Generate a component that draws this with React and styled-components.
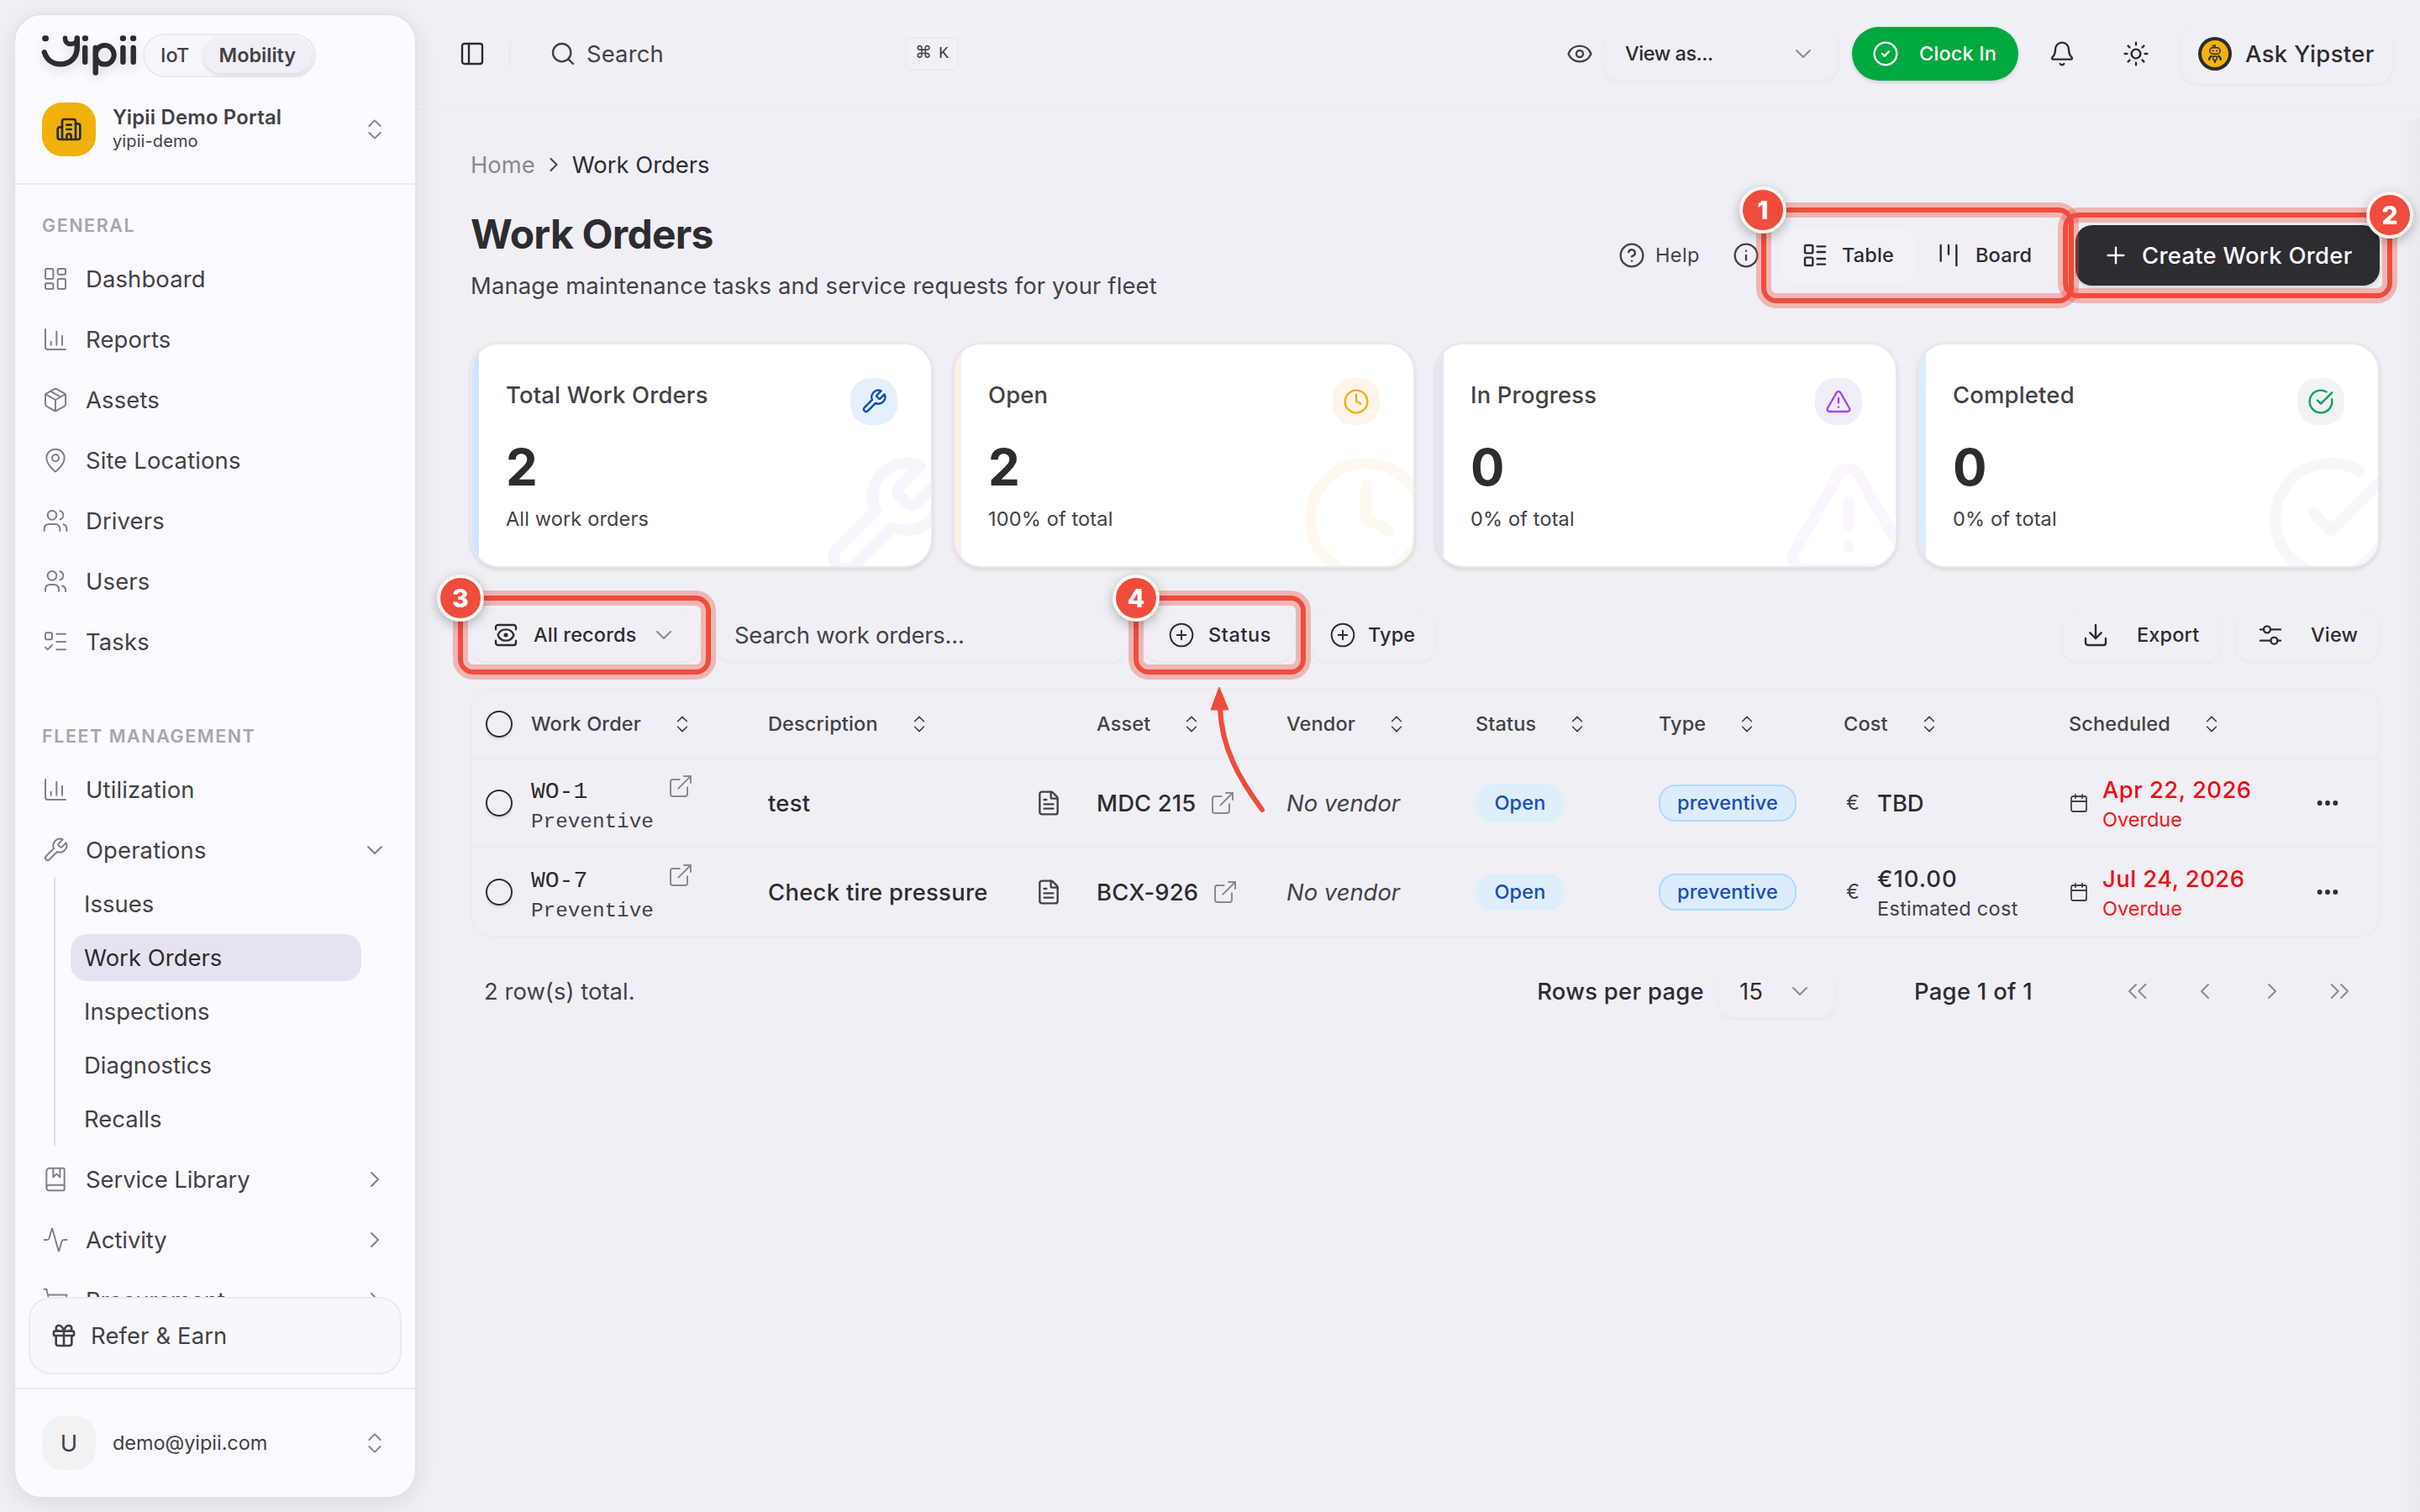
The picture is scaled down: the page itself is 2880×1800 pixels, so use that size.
import styled, { createGlobalStyle, css } from "styled-components";
import {
  Activity,
  Bell,
  BookMarked,
  Building2,
  Calendar,
  ChartColumn,
  ChevronDown,
  ChevronLeft,
  ChevronRight,
  ChevronsUpDown,
  CircleCheck,
  CircleCheckBig,
  CircleHelp,
  CirclePlus,
  Clock,
  Download,
  Ellipsis,
  ExternalLink,
  Eye,
  FileText,
  Gift,
  Info,
  Kanban,
  LayoutDashboard,
  LayoutList,
  ListTodo,
  MapPin,
  Package,
  PanelLeft,
  Plus,
  Search,
  ShoppingCart,
  Sun,
  TriangleAlert,
  Users,
  View,
} from "lucide-react";

const colors = {
  bg: "#f0eff5",
  panel: "#fbfaff",
  dark: "#2d2c31",
  text: "#434246",
  gray: "#8a898e",
  faint: "#a7a6ab",
  line: "#ebeaef",
  red: "#ef4c3d",
};

const GlobalStyle = createGlobalStyle`
  * {
    box-sizing: border-box;
  }

  body {
    margin: 0;
    background-color: ${colors.bg};
    color: ${colors.text};
    font-family: Inter, "Liberation Sans", sans-serif;
    font-size: 27.4px;
    letter-spacing: 0.05px;
    line-height: 40px;
  }

  svg {
    display: block;
    flex-shrink: 0;
  }
`;

const Page = styled.div`
  position: relative;
  display: flex;
  width: 2880px;
  height: 1800px;
  overflow: hidden;
  background-color: ${colors.bg};
`;

const Text = styled.span`
  color: ${(p) => p.$color || colors.text};
  font-size: ${(p) => p.$size || 27.4}px;
  font-weight: ${(p) => p.$weight || 400};
  letter-spacing: ${(p) => p.$ls ?? 0.15}px;
  line-height: ${(p) => p.$lh || 40}px;
  white-space: nowrap;
`;

const Strong = styled(Text)`
  color: ${(p) => p.$color || colors.dark};
  font-weight: 500;
  letter-spacing: ${(p) => p.$ls ?? 0.3}px;
`;

const Label = styled(Text)`
  color: ${(p) => p.$color || colors.dark};
  font-size: 23.5px;
  font-weight: 500;
`;

/* ---------- sidebar ---------- */

const Sidebar = styled.aside`
  display: flex;
  flex-direction: column;
  flex-shrink: 0;
  width: 480px;
  height: 1768px;
  margin: 16px 0 0 16px;
  overflow: hidden;
  background-color: ${colors.panel};
  border: 2px solid #e3e2e8;
  border-radius: 34px;
  box-shadow: 0 6px 28px rgba(40, 30, 20, 0.09);
`;

const SidebarTop = styled.div`
  height: 202px;
  padding: 22px 32px 0;
  border-bottom: 2px solid ${colors.line};
`;

const LogoRow = styled.div`
  display: flex;
  gap: 8px;
  height: 52px;
`;

const LogoSvg = styled.svg`
  margin-top: 2px;
  overflow: visible;
  filter: drop-shadow(0 6px 6px rgba(0, 0, 0, 0.12));
`;

const Switcher = styled.div`
  display: flex;
  align-items: center;
  width: 206px;
  height: 52px;
  padding: 3px;
  background-color: #f7f6fa;
  border: 2px solid ${colors.line};
  border-radius: 26px;
`;

const SwitcherItem = styled.div`
  display: flex;
  align-items: center;
  justify-content: center;
  width: ${(p) => p.$w}px;
  height: 42px;
  border-radius: 21px;

  ${(p) =>
    p.$active &&
    css`
      background-color: ${colors.bg};
      box-shadow: 0 2px 5px rgba(0, 0, 0, 0.13);
    `}
`;

const OrgRow = styled.div`
  display: flex;
  align-items: center;
  gap: 20px;
  height: 64px;
  margin-top: 30px;
`;

const OrgBadge = styled.div`
  display: flex;
  align-items: center;
  justify-content: center;
  width: 64px;
  height: 64px;
  color: ${colors.dark};
  background-color: ${(p) => p.$bg};
  border-radius: 24px;
`;

const Stack = styled.div`
  display: flex;
  flex-direction: column;
`;

const OrgName = styled(Stack)`
  height: 60px;
`;

const Grow = styled.div`
  flex: 1;
`;

const Nav = styled.nav`
  flex: 1;
  min-height: 0;
  padding-top: 28px;
  overflow: hidden;
`;

const NavLabel = styled.div`
  height: 40px;
  margin: ${(p) => p.$mt || 0}px 0 8px 32px;
  color: ${colors.faint};
  font-size: 21.5px;
  font-weight: 600;
  letter-spacing: 1.55px;
`;

const NavItem = styled.div`
  display: flex;
  align-items: center;
  gap: 20px;
  height: 72px;
  padding: 0 32px;

  svg {
    color: #828186;
  }
`;

const SubNav = styled.div`
  display: flex;
  flex-direction: column;
  gap: 8px;
  margin: -4px 0 4px 46px;
  padding: 4px 0;
  border-left: 2px solid #e1e0e5;
`;

const SubItem = styled.div`
  width: 346px;
  height: 56px;
  margin-left: 18px;
  padding: 8px 16px;
  color: ${(p) => (p.$active ? colors.dark : colors.text)};
  background-color: ${(p) => (p.$active ? "#e6e3f1" : "transparent")};
  border-radius: 20px;
`;

const ReferCard = styled.div`
  display: flex;
  align-items: center;
  gap: 16px;
  height: 92px;
  margin: 0 16px 16px;
  padding-left: 24px;
  background-color: #f8f7fc;
  border: 2px solid ${colors.line};
  border-radius: 26px;
`;

const UserRow = styled.div`
  display: flex;
  align-items: center;
  gap: 20px;
  height: 130px;
  padding: 0 32px;
  border-top: 2px solid ${colors.line};
`;

/* ---------- header ---------- */

const Main = styled.main`
  flex: 1;
  min-width: 0;
`;

const Header = styled.header`
  display: flex;
  align-items: center;
  height: 128px;
  padding: 2px 32px 0 50px;
  color: ${colors.dark};
  border-bottom: 2px solid #edecf1;
`;

const Divider = styled.div`
  width: 2px;
  height: 32px;
  margin: 0 31px 0 28px;
  background-color: #eae9ee;
`;

const Box = styled.div`
  display: flex;
  align-items: center;
  gap: ${(p) => p.$gap || 0}px;
  width: ${(p) => p.$w}px;
  height: ${(p) => p.$h || 64}px;
  margin-left: ${(p) => p.$ml || 0}px;
  padding-left: ${(p) => p.$pl || 0}px;
  border: 1px solid #edecf2;
  border-radius: ${(p) => p.$r || 20}px;
  box-shadow: 0 2px 3px rgba(0, 0, 0, 0.035);
`;

const SearchBox = styled(Box)`
  background-color: #f1f0f5;
  border-color: transparent;
  box-shadow: none;
`;

const Kbd = styled.kbd`
  display: flex;
  align-items: center;
  justify-content: center;
  gap: 8px;
  width: 64px;
  height: 40px;
  margin-right: 7px;
  color: ${colors.text};
  font-family: "Liberation Mono", "DejaVu Sans", monospace;
  font-size: 20px;
  border: 2px solid #ebeaf0;
  border-radius: 8px;
`;

const SelectChevron = styled.div`
  margin-right: 25px;
  color: ${colors.gray};
`;

const ClockIn = styled.div`
  display: flex;
  align-items: center;
  gap: 24px;
  width: 198px;
  height: 64px;
  margin-left: 16px;
  padding-left: 24px;
  color: #ffffff;
  background-color: #00a840;
  border-radius: 32px;
  box-shadow: 0 2px 4px rgba(0, 0, 0, 0.14);
`;

const IconButton = styled.div`
  display: flex;
  align-items: center;
  justify-content: center;
  width: 64px;
  height: 64px;
  margin-left: ${(p) => p.$ml || 0}px;
`;

/* ---------- content ---------- */

const Content = styled.div`
  padding: 48px 48px 0 64px;
`;

const Breadcrumb = styled.div`
  display: flex;
  align-items: center;
  gap: 8px;
  height: 40px;
`;

const PageHead = styled.div`
  display: flex;
  align-items: center;
  height: 120px;
  margin-top: 28px;
`;

const Heading = styled(Stack)`
  height: 120px;
`;

const Title = styled.h1`
  margin: 0 0 6px;
  color: ${colors.dark};
  font-size: 48px;
  font-weight: 700;
  letter-spacing: -0.75px;
  line-height: 70px;
`;

const Hint = styled.div`
  display: flex;
  align-items: center;
  gap: 12px;
  width: ${(p) => p.$w}px;
`;

const Toggle = styled.div`
  display: flex;
  align-items: center;
  width: 336px;
  height: 84px;
  margin-right: 20px;
  padding-left: 5px;
  border: 1px solid #edecf1;
  border-radius: 24px;
`;

const ToggleItem = styled.div`
  display: flex;
  align-items: center;
  gap: 16px;
  height: 68px;
  width: ${(p) => p.$w}px;
  padding-left: 24px;
  color: ${colors.dark};
  background-color: ${(p) => (p.$active ? "#f2f1f6" : "transparent")};
  border-radius: 20px;
`;

const CreateButton = styled.div`
  display: flex;
  align-items: center;
  gap: 15px;
  width: 362px;
  height: 72px;
  padding-left: 32px;
  color: #ffffff;
  background-color: ${colors.dark};
  border-radius: 20px;
  box-shadow: 0 2px 4px rgba(0, 0, 0, 0.15);
`;

const Cards = styled.div`
  display: grid;
  grid-template-columns: repeat(4, 1fr);
  gap: 24px;
  margin-top: 44px;
`;

const Card = styled.div`
  position: relative;
  height: 268px;
  padding: 40px;
  overflow: hidden;
  background-color: #ffffff;
  background-image: linear-gradient(${(p) => p.$strip}, ${(p) => p.$strip});
  background-repeat: no-repeat;
  background-size: 8px 100%;
  border: 2px solid #e9e8ed;
  border-radius: 34px;
  box-shadow: 0 2px 5px rgba(0, 0, 0, 0.12);
`;

const CardTop = styled.div`
  display: flex;
  justify-content: space-between;
  height: 56px;
`;

const Chip = styled.div`
  display: flex;
  align-items: center;
  justify-content: center;
  width: 56px;
  height: 56px;
  color: ${(p) => p.$color};
  background-color: ${(p) => p.$bg};
  border-radius: 24px;
`;

const Watermark = styled.div`
  position: absolute;
  right: -24px;
  bottom: -24px;
  color: ${(p) => p.$color};
`;

const CardValue = styled.div`
  margin-top: 20px;
  color: ${colors.dark};
  font-size: 60px;
  font-weight: 700;
  line-height: 60px;
`;

const CardNote = styled.div`
  margin-top: 16px;
  font-size: 23.5px;
  letter-spacing: 0.15px;
  line-height: 32px;
`;

const Toolbar = styled.div`
  display: flex;
  align-items: center;
  height: 64px;
  margin-top: 48px;
  color: ${colors.dark};
`;

/* ---------- table ---------- */

const Table = styled.div`
  margin-top: 32px;
  height: 296px;
  border: 2px solid #ecebf0;
  border-radius: 24px;
`;

const Row = styled.div`
  display: grid;
  grid-template-columns: 54px 282px 391px 226px 225px 218px 220px 268px 292px 1fr;
  align-items: center;
  height: ${(p) => (p.$head ? 82 : 106)}px;
  padding-left: 16px;
  border-bottom: 2px solid #ecebf0;

  &:last-child {
    height: 104px;
    border-bottom: none;
  }
`;

const Cell = styled.div`
  display: flex;
  align-items: center;
  gap: ${(p) => p.$gap || 0}px;
`;

const OrderCell = styled(Cell)`
  align-items: flex-start;

  svg {
    margin-top: 3px;
  }
`;

const OrderId = styled(Stack)`
  padding-top: 6px;
`;

const Check = styled.div`
  width: 32px;
  height: 32px;
  border: 2px solid ${colors.dark};
  border-radius: 50%;
  box-shadow: 0 2px 3px rgba(0, 0, 0, 0.12);
`;

const Mono = styled.span`
  width: 146px;
  color: ${(p) => p.$color || colors.text};
  font-family: "Liberation Mono", monospace;
  font-size: ${(p) => p.$size}px;
  letter-spacing: 0;
  line-height: ${(p) => p.$lh}px;
`;

const Description = styled(Strong)`
  width: 318px;
`;

const Badge = styled.div`
  display: flex;
  align-items: center;
  justify-content: center;
  width: ${(p) => p.$w}px;
  height: 44px;
  background-color: ${(p) => (p.$outlined ? "#dbecfe" : "#deeefb")};
  border: 2px solid ${(p) => (p.$outlined ? "#b7d6fd" : "transparent")};
  border-radius: 20px;
`;

const Euro = styled.span`
  width: 40px;
  padding-left: 3px;
  font-size: 24px;
`;

const TableFooter = styled.div`
  display: flex;
  align-items: center;
  height: 64px;
  margin-top: 32px;
  padding: 0 16px;
`;

const PageCount = styled(Strong)`
  width: 312px;
  padding-left: 94px;
`;

const PageButton = styled.div`
  display: flex;
  align-items: center;
  justify-content: center;
  width: 64px;
  height: 64px;
  margin-left: 16px;
  color: ${colors.gray};
  border: 1px solid #eeedf2;
  border-radius: 20px;
`;

/* ---------- callouts drawn over the page ---------- */

const Callout = styled.div`
  position: absolute;
  left: ${(p) => p.$x - 3}px;
  top: ${(p) => p.$y - 3}px;
  width: ${(p) => p.$w + 6}px;
  height: ${(p) => p.$h + 6}px;
  border: 6px solid ${colors.red};
  border-radius: 18px;
  box-shadow:
    0 0 0 6px rgba(239, 76, 61, 0.35),
    inset 0 0 0 6px rgba(239, 76, 61, 0.35);
`;

const CalloutNumber = styled.div`
  position: absolute;
  left: ${(p) => p.$x - 28}px;
  top: ${(p) => p.$y - 28}px;
  display: flex;
  align-items: center;
  justify-content: center;
  width: 56px;
  height: 56px;
  color: #ffffff;
  font-size: 30px;
  font-weight: 800;
  background-color: ${colors.red};
  border: 4px solid #fdf6f1;
  border-radius: 50%;
  box-shadow: 0 4px 14px rgba(0, 0, 0, 0.28);
`;

const Arrow = styled.svg`
  position: absolute;
  left: 1430px;
  top: 810px;
`;

const EdgeShade = styled.div`
  position: absolute;
  top: 140px;
  right: 0;
  bottom: 0;
  width: 30px;
  border-top-left-radius: 30px;
  background: linear-gradient(to right, rgba(235, 234, 236, 0), #ebeaed);
`;

const Logo = () => (
  <LogoSvg
    width="112"
    height="48"
    viewBox="0 0 112 48"
    fill="none"
    stroke={colors.dark}
    strokeWidth="6.4"
    strokeLinecap="round"
    strokeLinejoin="round"
  >
    <g fill={colors.dark} stroke="none">
      <rect x="0.3" y="0.2" width="7.6" height="7" rx="3" />
      <rect x="47.8" y="0.2" width="7.2" height="6.8" rx="3" />
      <rect x="92.8" y="0.2" width="7.2" height="6.8" rx="3" />
      <rect x="105" y="0.2" width="7.2" height="6.8" rx="3" />
    </g>
    <path d="M2.8 20.2c3 9.2 10 14.2 18.8 14.2 12.4 0 20.2-8.4 20.2-20.2V3.4" />
    <path d="M27.5 3.4c0 4.8 2.8 7 6.6 7 4.2 0 7.7-2.5 7.7-7" strokeWidth="5.6" />
    <path d="M51.2 15v16.8M96.4 15v16.8M108.7 15v16.8M63.7 15v29.6" />
    <ellipse cx="74.7" cy="23.3" rx="11" ry="11.3" strokeWidth="6" />
  </LogoSvg>
);

const Icon = ({ as: Shape, size = 32, stroke = 1.5, color }) => (
  <Shape size={size} strokeWidth={stroke} color={color || "currentColor"} />
);

const SvgIcon = ({ children, size = 32, strokeWidth = 1.5 }) => (
  <svg
    width={size}
    height={size}
    viewBox="0 0 24 24"
    fill="none"
    stroke="currentColor"
    strokeWidth={strokeWidth}
    strokeLinecap="round"
    strokeLinejoin="round"
  >
    {children}
  </svg>
);

const TeamIcon = () => (
  <SvgIcon>
    <circle cx="9" cy="7" r="4" />
    <path d="M3 21v-2a4 4 0 0 1 4-4h4a4 4 0 0 1 4 4v2M16 3.13a4 4 0 0 1 0 7.75M21 21v-2a4 4 0 0 0-3-2.85" />
  </SvgIcon>
);

const WrenchIcon = ({ size, strokeWidth }) => (
  <SvgIcon size={size} strokeWidth={strokeWidth}>
    <path d="M14.7 6.3a1 1 0 0 0 0 1.4l1.6 1.6a1 1 0 0 0 1.4 0l3.77-3.77a6 6 0 0 1-7.94 7.94l-6.91 6.91a2.12 2.12 0 0 1-3-3l6.91-6.91a6 6 0 0 1 7.94-7.94l-3.76 3.76z" />
  </SvgIcon>
);

const MixerIcon = () => (
  <SvgIcon strokeWidth={1.8}>
    <circle cx="9" cy="7" r="3" />
    <circle cx="15.3" cy="17" r="3" />
    <path d="M3 7h3M12 7h9M3 17h9.3M18.3 17H21" />
  </SvgIcon>
);

const DoubleLeft = () => (
  <SvgIcon>
    <path d="m10.5 18-6-6 6-6M19 18l-6-6 6-6" />
  </SvgIcon>
);

const DoubleRight = () => (
  <SvgIcon>
    <path d="m13.5 18 6-6-6-6M5 18l6-6-6-6" />
  </SvgIcon>
);

const RobotAvatar = () => (
  <svg width="40" height="40" viewBox="0 0 40 40">
    <circle cx="20" cy="20" r="20" fill={colors.dark} />
    <circle cx="20" cy="20" r="16" fill="#f1b20c" />
    <g fill="none" stroke={colors.dark} strokeWidth="1.4" strokeLinecap="round">
      <path d="M20 12.5v-3M17 10.5h3" />
      <rect x="13.8" y="12.8" width="12.4" height="7.4" rx="3.7" />
      <path d="M17 16.2l1.2.6M23 16.2l-1.2.6" />
      <path d="M16 22.8c-1.8.6-2.8 2-2.8 4.2M24 22.8c1.8.6 2.8 2 2.8 4.2" strokeWidth="2.2" />
      <circle cx="20" cy="25.2" r="2.4" />
      <path d="M20 28v2" strokeWidth="2.2" />
    </g>
  </svg>
);

const general = [
  { label: "Dashboard", icon: <Icon as={LayoutDashboard} /> },
  { label: "Reports", icon: <Icon as={ChartColumn} /> },
  { label: "Assets", icon: <Icon as={Package} /> },
  { label: "Site Locations", icon: <Icon as={MapPin} /> },
  { label: "Drivers", icon: <Icon as={Users} /> },
  { label: "Users", icon: <TeamIcon /> },
  { label: "Tasks", icon: <Icon as={ListTodo} /> },
];

const operations = ["Issues", "Work Orders", "Inspections", "Diagnostics", "Recalls"];

const collapsed = [
  { label: "Service Library", icon: BookMarked },
  { label: "Activity", icon: Activity },
  { label: "Procurement", icon: ShoppingCart },
];

const stats = [
  {
    title: "Total Work Orders",
    value: "2",
    note: "All work orders",
    icon: WrenchIcon,
    color: "#1450b4",
    chip: "#e6effd",
    strip: "#cfe5fe",
    mark: "#f6f5fb",
  },
  {
    title: "Open",
    value: "2",
    note: "100% of total",
    icon: Clock,
    color: "#f0b010",
    chip: "#fff4ea",
    strip: "#fcefe3",
    mark: "#fff8f0",
  },
  {
    title: "In Progress",
    value: "0",
    note: "0% of total",
    icon: TriangleAlert,
    color: "#a947f6",
    chip: "#f0eef7",
    strip: "#e7e4f1",
    mark: "#faf5ff",
  },
  {
    title: "Completed",
    value: "0",
    note: "0% of total",
    icon: CircleCheckBig,
    color: "#0ea45d",
    chip: "#f1f3f5",
    strip: "#dcecfb",
    mark: "#f6f7f9",
  },
];

const columns = [
  "Work Order",
  "Description",
  "Asset",
  "Vendor",
  "Status",
  "Type",
  "Cost",
  "Scheduled",
];

const orders = [
  {
    id: "WO-1",
    description: "test",
    asset: "MDC 215",
    cost: "TBD",
    date: "Apr 22, 2026",
  },
  {
    id: "WO-7",
    description: "Check tire pressure",
    asset: "BCX-926",
    cost: "€10.00",
    costNote: "Estimated cost",
    date: "Jul 24, 2026",
  },
];

const AppSidebar = () => (
  <Sidebar>
    <SidebarTop>
      <LogoRow>
        <Logo />
        <Switcher>
          <SwitcherItem $w={67}>
            <Text $size={23.5} $weight={550}>IoT</Text>
          </SwitcherItem>
          <SwitcherItem $w={130} $active>
            <Text $size={23.5} $weight={600} $ls={0}>Mobility</Text>
          </SwitcherItem>
        </Switcher>
      </LogoRow>
      <OrgRow>
        <OrgBadge $bg="#f1b10b">
          <Icon as={Building2} stroke={2} />
        </OrgBadge>
        <OrgName>
          <Text $size={23.8} $weight={600} $lh={32} $ls={0.25}>Yipii Demo Portal</Text>
          <Text $size={20} $lh={24} $ls={0.1}>yipii-demo</Text>
        </OrgName>
        <Grow />
        <Icon as={ChevronsUpDown} color={colors.gray} />
      </OrgRow>
    </SidebarTop>
    <Nav>
      <NavLabel>GENERAL</NavLabel>
      {general.map((item) => (
        <NavItem key={item.label}>
          {item.icon}
          <Text>{item.label}</Text>
        </NavItem>
      ))}
      <NavLabel $mt={56}>FLEET MANAGEMENT</NavLabel>
      <NavItem>
        <Icon as={ChartColumn} />
        <Text>Utilization</Text>
      </NavItem>
      <NavItem>
        <WrenchIcon />
        <Text>Operations</Text>
        <Grow />
        <Icon as={ChevronDown} />
      </NavItem>
      <SubNav>
        {operations.map((name) => (
          <SubItem key={name} $active={name === "Work Orders"}>
            {name}
          </SubItem>
        ))}
      </SubNav>
      {collapsed.map((item) => (
        <NavItem key={item.label}>
          <Icon as={item.icon} />
          <Text $ls={-0.05}>{item.label}</Text>
          <Grow />
          <Icon as={ChevronRight} />
        </NavItem>
      ))}
    </Nav>
    <ReferCard>
      <Icon as={Gift} stroke={2} />
      <Text>Refer &amp; Earn</Text>
    </ReferCard>
    <UserRow>
      <OrgBadge $bg="#f2f1f4">
        <Text>U</Text>
      </OrgBadge>
      <Text $size={23.5} $ls={-0.05}>demo@yipii.com</Text>
      <Grow />
      <Icon as={ChevronsUpDown} color={colors.gray} />
    </UserRow>
  </Sidebar>
);

const AppHeader = () => (
  <Header>
    <Icon as={PanelLeft} stroke={1.8} />
    <Divider />
    <SearchBox $w={510} $pl={14} $gap={12}>
      <Icon as={Search} stroke={1.8} color={colors.text} />
      <Text>Search</Text>
      <Grow />
      <Kbd>
        <span>⌘</span>
        <span>K</span>
      </Kbd>
    </SearchBox>
    <Grow />
    <Icon as={Eye} stroke={1.8} color={colors.text} />
    <Box $w={280} $ml={12} $pl={25}>
      <Label $ls={-0.45}>View as...</Label>
      <Grow />
      <SelectChevron>
        <Icon as={ChevronDown} />
      </SelectChevron>
    </Box>
    <ClockIn>
      <Icon as={CircleCheck} stroke={1.8} />
      <Label $color="#fff">Clock In</Label>
    </ClockIn>
    <IconButton $ml={20}>
      <Icon as={Bell} stroke={1.8} />
    </IconButton>
    <IconButton $ml={24}>
      <Icon as={Sun} stroke={1.8} />
    </IconButton>
    <Box $w={254} $h={72} $ml={20} $pl={21} $gap={16} $r={22}>
      <RobotAvatar />
      <Strong $ls={0.4}>Ask Yipster</Strong>
    </Box>
  </Header>
);

const StatCard = ({ stat }) => (
  <Card $strip={stat.strip}>
    <Watermark $color={stat.mark}>
      <Icon as={stat.icon} size={160} stroke={2} />
    </Watermark>
    <CardTop>
      <Text $weight={450} $ls={0.2}>{stat.title}</Text>
      <Chip $bg={stat.chip} $color={stat.color}>
        <Icon as={stat.icon} stroke={1.8} />
      </Chip>
    </CardTop>
    <CardValue>{stat.value}</CardValue>
    <CardNote>{stat.note}</CardNote>
  </Card>
);

const OrderRow = ({ order }) => (
  <Row>
    <Check />
    <OrderCell $gap={16}>
      <OrderId>
        <Mono $size={28} $lh={40} $color={colors.dark}>{order.id}</Mono>
        <Mono $size={24.3} $lh={32}>Preventive</Mono>
      </OrderId>
      <Icon as={ExternalLink} color={colors.gray} />
    </OrderCell>
    <Cell>
      <Description>{order.description}</Description>
      <Icon as={FileText} stroke={1.8} />
    </Cell>
    <Cell $gap={16}>
      <Strong $ls={0.15}>{order.asset}</Strong>
      <Icon as={ExternalLink} color={colors.gray} />
    </Cell>
    <Text $ls={0}>
      <i>No vendor</i>
    </Text>
    <Badge $w={106}>
      <Label $color="#1a4fb8">Open</Label>
    </Badge>
    <Badge $w={164} $outlined>
      <Label $color="#1a4fb8">preventive</Label>
    </Badge>
    <Cell>
      <Euro>€</Euro>
      <Stack>
        <Strong $ls={order.costNote ? 1 : 0}>{order.cost}</Strong>
        {order.costNote && <Text $size={23.5} $lh={32} $ls={0.3}>{order.costNote}</Text>}
      </Stack>
    </Cell>
    <Cell $gap={16}>
      <Icon as={Calendar} size={24} stroke={1.8} />
      <Stack>
        <Strong $color="#f20a15" $ls={0.45}>{order.date}</Strong>
        <Text $size={23.5} $lh={32} $color="#f01820" $ls={0}>Overdue</Text>
      </Stack>
    </Cell>
    <Icon as={Ellipsis} stroke={2.4} color={colors.dark} />
  </Row>
);

const App = () => {
  return (
    <>
      <GlobalStyle />
      <Page>
        <AppSidebar />
        <Main>
          <AppHeader />
          <Content>
            <Breadcrumb>
              <Text $color={colors.gray} $ls={0}>Home</Text>
              <Icon as={ChevronRight} size={28} stroke={1.8} />
              <Text $color={colors.dark} $ls={0}>Work Orders</Text>
            </Breadcrumb>
            <PageHead>
              <Heading>
                <Title>Work Orders</Title>
                <Text>Manage maintenance tasks and service requests for your fleet</Text>
              </Heading>
              <Grow />
              <Hint $w={136}>
                <Icon as={CircleHelp} stroke={1.8} />
                <Text $size={23.5} $ls={0.4}>Help</Text>
              </Hint>
              <Hint $w={52}>
                <Icon as={Info} stroke={1.8} />
              </Hint>
              <Toggle>
                <ToggleItem $active $w={159}>
                  <Icon as={LayoutList} stroke={1.8} />
                  <Label>Table</Label>
                </ToggleItem>
                <ToggleItem $w={160}>
                  <Icon as={Kanban} stroke={1.8} />
                  <Label>Board</Label>
                </ToggleItem>
              </Toggle>
              <CreateButton>
                <Icon as={Plus} stroke={1.8} />
                <Strong $color="#fff">Create Work Order</Strong>
              </CreateButton>
            </PageHead>

            <Cards>
              {stats.map((stat) => (
                <StatCard key={stat.title} stat={stat} />
              ))}
            </Cards>

            <Toolbar>
              <Box $w={272} $pl={25} $gap={17}>
                <Icon as={View} stroke={1.8} />
                <Label>All records</Label>
                <Icon as={ChevronDown} color={colors.gray} />
              </Box>
              <Box $w={490} $ml={20} $pl={21}>
                <Text $ls={-0.2}>Search work orders...</Text>
              </Box>
              <Box $w={178} $ml={20} $pl={27} $gap={16}>
                <Icon as={CirclePlus} />
                <Label $ls={0.6}>Status</Label>
              </Box>
              <Box $w={149} $ml={20} $pl={21} $gap={14}>
                <Icon as={CirclePlus} />
                <Label>Type</Label>
              </Box>
              <Grow />
              <Box $w={190} $pl={23} $gap={33}>
                <Icon as={Download} stroke={1.8} />
                <Label>Export</Label>
              </Box>
              <Box $w={172} $ml={16} $pl={25} $gap={32}>
                <MixerIcon />
                <Label>View</Label>
              </Box>
            </Toolbar>

            <Table>
              <Row $head>
                <Check />
                {columns.map((name) => (
                  <Cell key={name} $gap={36}>
                    <Label $color={colors.text}>{name}</Label>
                    <Icon as={ChevronsUpDown} size={26} />
                  </Cell>
                ))}
              </Row>
              {orders.map((order) => (
                <OrderRow key={order.id} order={order} />
              ))}
            </Table>

            <TableFooter>
              <Text $ls={0.05}>2 row(s) total.</Text>
              <Grow />
              <Strong>Rows per page</Strong>
              <Box $w={140} $ml={16} $pl={25} $gap={28}>
                <Text $color={colors.dark}>15</Text>
                <Icon as={ChevronDown} color={colors.gray} />
              </Box>
              <PageCount>Page 1 of 1</PageCount>
              <PageButton>
                <DoubleLeft />
              </PageButton>
              <PageButton>
                <Icon as={ChevronLeft} />
              </PageButton>
              <PageButton>
                <Icon as={ChevronRight} />
              </PageButton>
              <PageButton>
                <DoubleRight />
              </PageButton>
            </TableFooter>
          </Content>
        </Main>

        <EdgeShade />
        <Callout $x={2099} $y={250} $w={366} $h={108} />
        <Callout $x={2458} $y={256} $w={386} $h={96} />
        <Callout $x={548} $y={712} $w={295} $h={88} />
        <Callout $x={1352} $y={712} $w={199} $h={88} />
        <CalloutNumber $x={2098} $y={250}>1</CalloutNumber>
        <CalloutNumber $x={2844} $y={256}>2</CalloutNumber>
        <CalloutNumber $x={548} $y={712}>3</CalloutNumber>
        <CalloutNumber $x={1352} $y={712}>4</CalloutNumber>
        <Arrow width="90" height="170" viewBox="0 0 90 170" fill="none">
          <path
            d="M72 154C44 116 24 80 22 34"
            stroke={colors.red}
            strokeWidth="6"
            strokeLinecap="round"
          />
          <path d="M21 8 32 35H11Z" fill={colors.red} stroke={colors.red} strokeLinejoin="round" />
        </Arrow>
      </Page>
    </>
  );
};

export default App;
